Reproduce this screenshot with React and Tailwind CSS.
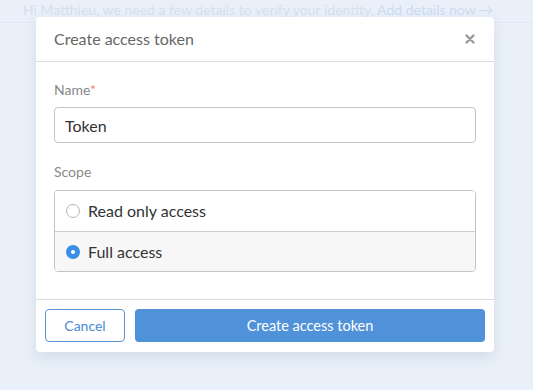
import React, { useState } from "react";

const App = () => {
  const [name, setName] = useState("Token");
  const [scope, setScope] = useState("full");

  const options = [
    { value: "read", label: "Read only access" },
    { value: "full", label: "Full access" },
  ];

  return (
    <div
      className="relative w-[533px] h-[390px] overflow-hidden bg-[#e9f0f9]"
      style={{ fontFamily: "Lato, 'Open Sans', sans-serif" }}
    >
      {/* banner behind the overlay */}
      <div className="h-[23px] border-b border-[#dfe7f2] pl-[23px] text-[14px] leading-[20px] text-[#d6e0ec] whitespace-nowrap">
        Hi Matthieu, we need a few details to verify your identity.{" "}
        <span className="text-[#cddcf0]">Add details now →</span>
      </div>

      {/* modal */}
      <div className="absolute left-[36px] top-[17px] w-[458px] rounded-[4px] bg-white shadow-[0_6px_14px_rgba(60,80,120,0.12)]">
        {/* Header */}
        <div className="flex items-center justify-between h-[45px] px-[18px] border-b border-[#dcdcdc]">
          <h1 className="text-[16px] text-[#666]">Create access token</h1>
          <button className="mr-[1px]">
            <svg width="10" height="10" viewBox="0 0 10 10">
              <path d="M1.5 1.5 L8.5 8.5 M8.5 1.5 L1.5 8.5" stroke="#9a9a9a" strokeWidth="2.4" strokeLinecap="round" />
            </svg>
          </button>
        </div>

        {/* Body */}
        <div className="px-[18px] pt-[18px] pb-[27px]">
          <label className="block text-[14px] text-[#888] leading-[20px]">
            Name<span className="text-[#f08a6c]">*</span>
          </label>
          <input
            value={name}
            onChange={(e) => setName(e.target.value)}
            className="mt-[7px] w-full h-[36px] px-[10px] border border-[#c4c4c4] rounded-[4px] text-[16px] text-[#333] outline-none"
          />

          <label className="block mt-[19px] text-[14px] text-[#888] leading-[20px]">
            Scope
          </label>
          <div className="mt-[8px] border border-[#c4c4c4] rounded-[4px] overflow-hidden">
            {options.map((o, i) => (
              <label
                key={o.value}
                onClick={() => setScope(o.value)}
                className={`flex items-center h-[40px] px-[11px] gap-[8px] cursor-pointer ${
                  i > 0 ? "border-t border-[#cfcfcf]" : ""
                } ${scope === o.value ? "bg-[#f7f7f7]" : "bg-white"}`}
              >
                {scope === o.value ? (
                  <span className="flex items-center justify-center w-[14px] h-[14px] rounded-full bg-[#3d8ee8]">
                    <span className="w-[4px] h-[4px] rounded-full bg-white" />
                  </span>
                ) : (
                  <span className="w-[14px] h-[14px] rounded-full border border-[#b5b5b5] bg-white" />
                )}
                <span className="text-[16px] text-[#333]">{o.label}</span>
              </label>
            ))}
          </div>
        </div>

        {/* Footer */}
        <div className="flex gap-[10px] px-[9px] pt-[9px] pb-[10px] border-t border-[#dcdcdc]">
          <button className="w-[80px] h-[33px] rounded-[4px] border border-[#5b95d6] text-[#4a8ad4] text-[14px]">
            Cancel
          </button>
          <button className="flex-1 h-[33px] rounded-[4px] bg-[#4f92d9] text-white text-[14.5px]">
            Create access token
          </button>
        </div>
      </div>
    </div>
  );
};

export default App;
